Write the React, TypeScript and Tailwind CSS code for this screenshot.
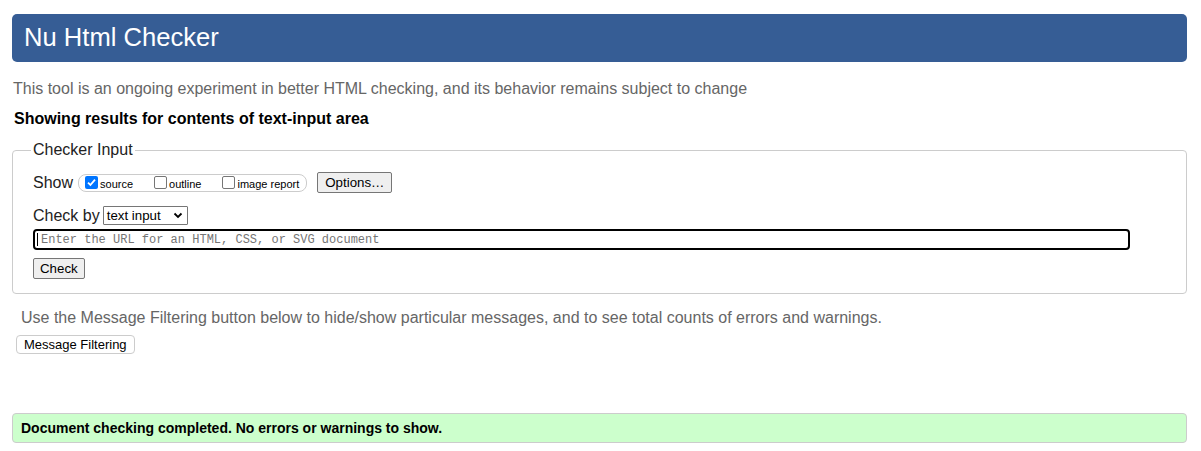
import React from "react";

function Box({ checked, label }: { checked?: boolean; label: string }) {
  return (
    <label className="flex items-center gap-[2px]">
      {checked ? (
        <span className="flex h-[13px] w-[13px] items-center justify-center rounded-[2px] bg-[#0075ff]">
          <svg width="11" height="11" viewBox="0 0 11 11">
            <path d="M2 5.6 L4.4 8 L9 2.6" fill="none" stroke="#fff" strokeWidth="1.8" />
          </svg>
        </span>
      ) : (
        <span className="h-[13px] w-[13px] rounded-[2px] border border-[#767676] bg-white" />
      )}
      <span className="mt-[3px] text-[11px] leading-none">{label}</span>
    </label>
  );
}

export default function App() {
  return (
    <div className="min-h-[451px] bg-white pl-[12px] pr-[14px] pt-[14px] text-black" style={{ fontFamily: '"Liberation Sans", Arial, sans-serif' }}>
      <div className="flex h-[48px] items-center rounded-[5px] bg-[#365d95] px-[12px]">
        <h1 className="text-[25.6px] leading-none text-white">Nu Html Checker</h1>
      </div>

      <p className="mt-[18px] pl-[1px] text-[16px] leading-[18px] text-[#666]">
        This tool is an ongoing experiment in better HTML checking, and its behavior remains subject to change
      </p>
      <p className="mt-[12px] pl-[2px] text-[16px] font-bold leading-[18px]">Showing results for contents of text-input area</p>

      <fieldset className="mt-[13px] rounded-[4px] border border-[#ccc] px-[20px] pb-[13px] pt-[13px]">
        <legend className="ml-[-2px] px-[2px] text-[16px] leading-[18px] text-[#222]">Checker Input</legend>

        <div className="flex items-center">
          <span className="text-[16px] leading-[18px] text-[#222]">Show</span>
          <div className="ml-[5px] flex h-[18px] items-center gap-[21px] rounded-[8px] border border-[#ccc] pl-[6px] pr-[7px]">
            <Box checked label="source" />
            <Box label="outline" />
            <Box label="image report" />
          </div>
          <button className="ml-[10px] h-[21px] rounded-[2px] border border-[#767676] bg-[#efefef] px-[7px] text-[13.3px] leading-none">
            Options…
          </button>
        </div>

        <div className="mt-[13px] flex items-center">
          <span className="text-[16px] leading-[18px] text-[#222]">Check by</span>
          <div className="ml-[3px] flex h-[19px] w-[85px] items-center justify-between rounded-[1px] border border-[#767676] bg-white pl-[3px] pr-[4px]">
            <span className="text-[13.3px] leading-none">text input</span>
            <svg width="10" height="7" viewBox="0 0 10 7">
              <path d="M1.5 1.5 L5 5 L8.5 1.5" fill="none" stroke="#000" strokeWidth="1.8" />
            </svg>
          </div>
        </div>

        <div className="mr-[36px] mt-[4px] flex h-[21px] items-center rounded-[4px] border-2 border-black pl-[2px]">
          <span className="h-[13px] w-px bg-black" />
          <span className="ml-[3px] text-[12px] leading-none text-[#757575]" style={{ fontFamily: '"Liberation Mono", monospace' }}>
            Enter the URL for an HTML, CSS, or SVG document
          </span>
        </div>

        <button className="mt-[8px] h-[21px] rounded-[2px] border border-[#767676] bg-[#efefef] px-[6px] text-[13.3px] leading-none">
          Check
        </button>
      </fieldset>

      <p className="mt-[15px] pl-[9px] text-[16px] leading-[18px] text-[#666]">
        Use the Message Filtering button below to hide/show particular messages, and to see total counts of errors and warnings.
      </p>
      <button className="ml-[4px] mt-[8px] h-[19px] rounded-[4px] border border-[#ccc] bg-white px-[7px] text-[13px] leading-none">
        Message Filtering
      </button>

      <div className="mt-[57px] flex h-[30px] items-center rounded-[4px] border border-[#ccc] bg-[#ccffcc] pl-[8px]">
        <span className="text-[14px] font-bold leading-none">Document checking completed. No errors or warnings to show.</span>
      </div>
    </div>
  );
}
